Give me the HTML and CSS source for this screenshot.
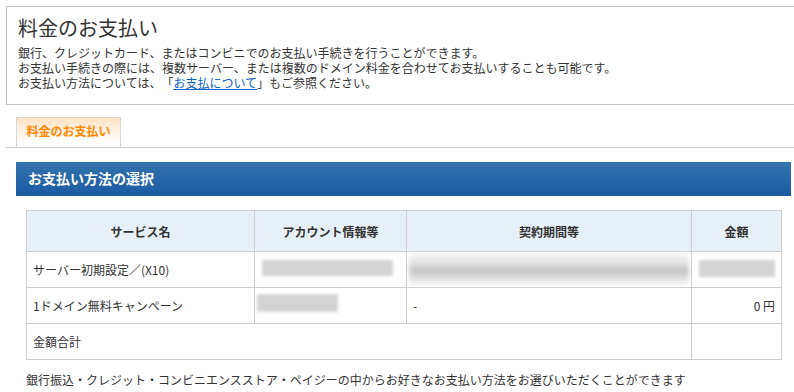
FILE: index.html
```html
<!DOCTYPE html>
<html lang="ja">
<head>
<meta charset="utf-8">
<title>料金のお支払い</title>
<link rel="stylesheet" href="styles.css">
</head>
<body>
<div class="page">
  <section class="intro">
    <h1 class="intro-title">料金のお支払い</h1>
    <p class="intro-text"><span class="line">銀行、クレジットカード、またはコンビニでのお支払い手続きを行うことができます。</span><span class="line">お支払い手続きの際には、複数サーバー、または複数のドメイン料金を合わせてお支払いすることも可能です。</span><span class="line">お支払い方法については、「<a href="#" class="link">お支払について</a>」もご参照ください。</span></p>
  </section>

  <div class="tabs">
    <div class="tab">料金のお支払い</div>
  </div>

  <div class="content">
    <h2 class="section-bar">お支払い方法の選択</h2>
    <table class="pay-table">
      <colgroup>
        <col class="c1"><col class="c2"><col class="c3"><col class="c4">
      </colgroup>
      <thead>
        <tr>
          <th>サービス名</th>
          <th>アカウント情報等</th>
          <th>契約期間等</th>
          <th>金額</th>
        </tr>
      </thead>
      <tbody>
        <tr>
          <td>サーバー初期設定／(X10)</td>
          <td class="blur-cell"><div class="blur blur-acct1"></div></td>
          <td class="blur-cell period"><div class="blur blur-period"></div></td>
          <td class="blur-cell"><div class="blur blur-amount"></div></td>
        </tr>
        <tr>
          <td>1ドメイン無料キャンペーン</td>
          <td class="blur-cell"><div class="blur blur-acct2"></div></td>
          <td>-</td>
          <td class="num">0&nbsp;円</td>
        </tr>
        <tr class="total">
          <td colspan="3">金額合計</td>
          <td></td>
        </tr>
      </tbody>
    </table>
    <p class="note">銀行振込・クレジット・コンビニエンスストア・ペイジーの中からお好きなお支払い方法をお選びいただくことができます</p>
  </div>
</div>
</body>
</html>
```

FILE: styles.css
```css
html, body {
  margin: 0;
  padding: 0;
  background: #fff;
  overflow: hidden;
}
body {
  font-family: "Noto Sans CJK JP", "Noto Sans", sans-serif;
  color: #333;
  font-size: 12px;
  text-spacing-trim: space-all;
}
.page {
  padding: 6px 0 0 6px;
}
.intro {
  border: 1px solid #c4c4c4;
  border-right: none;
  margin-right: -20px;
  padding: 9px 11px 0;
  height: 88px;
}
.intro-title {
  margin: 0;
  font-size: 20px;
  font-weight: normal;
  line-height: 24px;
}
.intro-text {
  margin: 5px 0 0;
  font-size: 12px;
  line-height: 15px;
}
.line {
  display: block;
  height: 15px;
  white-space: nowrap;
}
.link {
  color: #0b63c6;
  text-decoration: underline;
}
.tabs {
  margin-top: 12px;
  padding-left: 10px;
  border-bottom: 1px solid #cfcfcf;
  display: flex;
  height: 30px;
  margin-right: -20px;
}
.tab {
  width: 103px;
  height: 29px;
  border: 1px solid #d6d6d6;
  border-bottom: none;
  background: linear-gradient(#ffe3c4, #ffffff 85%);
  color: #ff8a00;
  font-weight: bold;
  font-size: 12px;
  line-height: 26px;
  text-align: center;
  box-sizing: content-box;
}
.content {
  padding: 14px 3px 0 10px;
}
.section-bar {
  margin: 0;
  height: 34px;
  line-height: 33px;
  padding-left: 12px;
  background: linear-gradient(#3373ad, #1b5ba2);
  color: #fff;
  font-size: 14px;
  font-weight: bold;
}
.pay-table {
  margin: 14px 10px 0;
  width: 755px;
  border-collapse: collapse;
  table-layout: fixed;
}
.c1 { width: 228px; }
.c2 { width: 152px; }
.c3 { width: 285px; }
.c4 { width: 90px; }
.pay-table th,
.pay-table td {
  border: 1px solid #cdcdcd;
  font-size: 12px;
}
.pay-table th {
  background: #e8f0f7;
  height: 40px;
  font-weight: bold;
  text-align: center;
  padding: 0;
}
.pay-table td {
  height: 35px;
  padding: 0 6px;
  text-align: left;
  vertical-align: middle;
}
.pay-table td.num {
  text-align: right;
}
.pay-table td.blur-cell {
  padding: 0;
  vertical-align: top;
}
.blur {
  background: #d4d4d4;
  filter: blur(1.5px);
}
.blur-acct1 {
  width: 131px;
  height: 16px;
  margin: 8px 0 0 7px;
}
.blur-acct2 {
  width: 81px;
  height: 18px;
  margin: 6px 0 0 2px;
}
.blur-amount {
  width: 76px;
  height: 17px;
  margin: 8px 0 0 7px;
}
.blur-period {
  height: 32px;
  margin: 1px 2px 0 2px;
  background: linear-gradient(#f6f6f6, #e6e6e6 30%, #c2c2c2 55%, #e4e4e4 80%, #f6f6f6);
  filter: blur(2px);
}
.total td {
  height: 35px;
}
.note {
  margin: 11px 0 0 10px;
  font-size: 12px;
  line-height: 18px;
}
```
